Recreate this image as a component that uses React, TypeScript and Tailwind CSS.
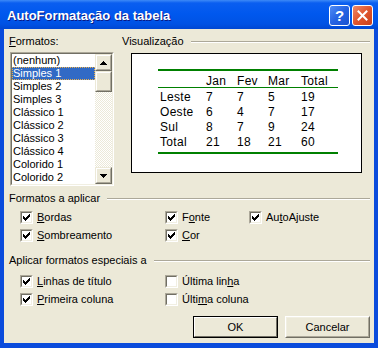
import React from "react";

const formats = [
  "(nenhum)",
  "Simples 1",
  "Simples 2",
  "Simples 3",
  "Clássico 1",
  "Clássico 2",
  "Clássico 3",
  "Clássico 4",
  "Colorido 1",
  "Colorido 2",
];

const rows = [
  ["Leste", "7", "7", "5", "19"],
  ["Oeste", "6", "4", "7", "17"],
  ["Sul", "8", "7", "9", "24"],
  ["Total", "21", "18", "21", "60"],
];

const CheckMark = () => (
  <svg width="7" height="7" viewBox="0 0 7 7" shapeRendering="crispEdges">
    <path
      d="M0 2h1v3H0z M1 3h1v3H1z M2 4h1v3H2z M3 3h1v3H3z M4 2h1v3H4z M5 1h1v3H5z M6 0h1v3H6z"
      fill="#000"
    />
  </svg>
);

const Check = ({ checked, children }: { checked: boolean; children: React.ReactNode }) => (
  <div className="flex h-[13px] items-center gap-[4px]">
    <span className="flex h-[13px] w-[13px] shrink-0 border border-t-[#ACA899] border-l-[#ACA899] border-r-white border-b-white">
      <span className="flex h-full w-full items-center justify-center border border-t-[#716F64] border-l-[#716F64] border-r-[#F1EFE2] border-b-[#F1EFE2] bg-white">
        {checked && <CheckMark />}
      </span>
    </span>
    <span className="leading-[13px] whitespace-nowrap">{children}</span>
  </div>
);

const Arrow = ({ down }: { down?: boolean }) => (
  <svg width="7" height="4" viewBox="0 0 7 4" shapeRendering="crispEdges">
    <path
      d={
        down
          ? "M0 0h7v1H0z M1 1h5v1H1z M2 2h3v1H2z M3 3h1v1H3z"
          : "M3 0h1v1H3z M2 1h3v1H2z M1 2h5v1H1z M0 3h7v1H0z"
      }
      fill="#000"
    />
  </svg>
);

// classic raised 3D box used for the scrollbar parts
const Raised = ({ className, children }: { className: string; children?: React.ReactNode }) => (
  <div className={`border border-t-[#ECE9D8] border-l-[#ECE9D8] border-r-[#716F64] border-b-[#716F64] ${className}`}>
    <div className="flex h-full w-full items-center justify-center border border-t-white border-l-white border-r-[#ACA899] border-b-[#ACA899] bg-[#ECE9D8]">
      {children}
    </div>
  </div>
);

const GroupTitle = ({ children }: { children: React.ReactNode }) => (
  <div className="flex h-[13px] items-center">
    <span className="leading-[13px] whitespace-nowrap">{children}</span>
    <div className="ml-[7px] h-[2px] flex-1 border-t border-t-[#ACA899] border-b border-b-white" />
  </div>
);

const App = () => {
  return (
    <div className="flex h-[348px] w-[378px] flex-col bg-[#0A4BDC] font-['Liberation_Sans',Arial,sans-serif] text-[11px] text-black">
      {/* Title bar */}
      <div className="flex h-[29px] shrink-0 items-center justify-between bg-[linear-gradient(to_bottom,#3d8af7_0px,#0a5ef0_3px,#0058ee_14px,#0052e4_24px,#0047d2_29px)] pl-[7px] pr-[5px] pt-[2px]">
        <span className="text-[13px] font-bold text-white [text-shadow:1px_1px_#0a1883]">
          AutoFormatação da tabela
        </span>
        <div className="flex gap-[2px]">
          <div className="flex h-[21px] w-[21px] items-center justify-center rounded-[3px] border border-white bg-[linear-gradient(135deg,#4f8cf5,#2563e3_50%,#1b52d0)] text-[15px] font-bold leading-none text-white">
            ?
          </div>
          <div className="flex h-[21px] w-[21px] items-center justify-center rounded-[3px] border border-white bg-[linear-gradient(135deg,#ef8a6a,#e0552d_50%,#c8401c)]">
            <svg width="11" height="11" viewBox="0 0 11 11">
              <path d="M1.5 1.5l8 8M9.5 1.5l-8 8" stroke="#fff" strokeWidth="2" strokeLinecap="square" />
            </svg>
          </div>
        </div>
      </div>

      {/* Body */}
      <div className="mx-[4px] mb-[5px] flex flex-1 flex-col bg-[#ECE9D8] pl-[5px] pr-[4px] pt-[6px]">
        <div className="flex">
          {/* Formatos */}
          <div className="flex w-[113px] shrink-0 flex-col">
            <span className="leading-[13px]">
              <u>F</u>ormatos:
            </span>
            <div className="ml-[1px] mt-[4px] h-[134px] w-[104px] border border-t-[#ACA899] border-l-[#ACA899] border-r-white border-b-white">
              <div className="flex h-full w-full border border-t-[#716F64] border-l-[#716F64] border-r-[#F1EFE2] border-b-[#F1EFE2] bg-white">
                <div className="flex flex-1 flex-col">
                  {formats.map((f) =>
                    f === "Simples 1" ? (
                      <div
                        key={f}
                        className="h-[13px] border border-dotted border-[#E9B04C] bg-[#316AC5] leading-[11px] text-white"
                      >
                        {f}
                      </div>
                    ) : (
                      <div key={f} className="h-[13px] border border-transparent leading-[11px]">
                        {f}
                      </div>
                    )
                  )}
                </div>
                <div className="flex w-[17px] flex-col">
                  <Raised className="h-[17px]">
                    <Arrow />
                  </Raised>
                  <Raised className="h-[21px]" />
                  <div className="flex-1 bg-[repeating-conic-gradient(#ece9d8_0%_25%,#ffffff_0%_50%)] bg-[length:2px_2px]" />
                  <Raised className="h-[17px]">
                    <Arrow down />
                  </Raised>
                </div>
              </div>
            </div>
          </div>

          {/* Visualização */}
          <div className="flex flex-1 flex-col">
            <GroupTitle>Visualização</GroupTitle>
            <div className="ml-[9px] mt-[5px] h-[120px] w-[231px] border border-black bg-white pl-[26px] pt-[15px]">
              <div className="w-[180px] font-['Liberation_Sans',Arial,sans-serif] text-[12px] tracking-[0.3px]">
                <div className="h-[2px] bg-[#008000]" />
                <div className="grid h-[16px] grid-cols-[46px_31px_31px_33px_39px] pt-[4px] leading-[12px]">
                  <span />
                  <span className="pl-[2px]">Jan</span>
                  <span className="pl-[2px]">Fev</span>
                  <span className="pl-[2px]">Mar</span>
                  <span className="pl-[2px]">Total</span>
                </div>
                <div className="h-[1px] bg-[#008000]" />
                {rows.map((r) => (
                  <div key={r[0]} className="grid h-[15px] grid-cols-[46px_31px_31px_33px_39px] pt-[3px] leading-[12px]">
                    {r.map((c, i) => (
                      <span key={i} className="pl-[2px]">
                        {c}
                      </span>
                    ))}
                  </div>
                ))}
                <div className="mt-[4px] h-[2px] bg-[#008000]" />
              </div>
            </div>
          </div>
        </div>

        {/* Formatos a aplicar */}
        <div className="mt-[6px]">
          <GroupTitle>Formatos a aplicar</GroupTitle>
        </div>
        <div className="mt-[6px] grid grid-cols-[145px_84px_1fr] gap-y-[5px] pl-[11px]">
          <Check checked>
            <u>B</u>ordas
          </Check>
          <Check checked>
            F<u>o</u>nte
          </Check>
          <Check checked>
            Au<u>t</u>oAjuste
          </Check>
          <Check checked>
            <u>S</u>ombreamento
          </Check>
          <Check checked>
            <u>C</u>or
          </Check>
        </div>

        {/* Aplicar formatos especiais a */}
        <div className="mt-[12px]">
          <GroupTitle>Aplicar formatos especiais a</GroupTitle>
        </div>
        <div className="mt-[8px] grid grid-cols-[145px_1fr] gap-y-[5px] pl-[11px]">
          <Check checked>
            <u>L</u>inhas de título
          </Check>
          <Check checked={false}>
            Última lin<u>h</u>a
          </Check>
          <Check checked>
            <u>P</u>rimeira coluna
          </Check>
          <Check checked={false}>
            Últi<u>m</u>a coluna
          </Check>
        </div>

        {/* Buttons */}
        <div className="mt-[10px] flex justify-end gap-[7px]">
          <div className="h-[22px] w-[85px] border border-black">
            <div className="flex h-full w-full items-center justify-center border border-t-white border-l-white border-r-[#716F64] border-b-[#716F64] bg-[#ECE9D8]">
              OK
            </div>
          </div>
          <div className="h-[22px] w-[85px] border border-t-white border-l-white border-r-[#716F64] border-b-[#716F64]">
            <div className="flex h-full w-full items-center justify-center border border-t-[#F1EFE2] border-l-[#F1EFE2] border-r-[#ACA899] border-b-[#ACA899] bg-[#ECE9D8]">
              Cancelar
            </div>
          </div>
        </div>
      </div>
    </div>
  );
};

export default App;
